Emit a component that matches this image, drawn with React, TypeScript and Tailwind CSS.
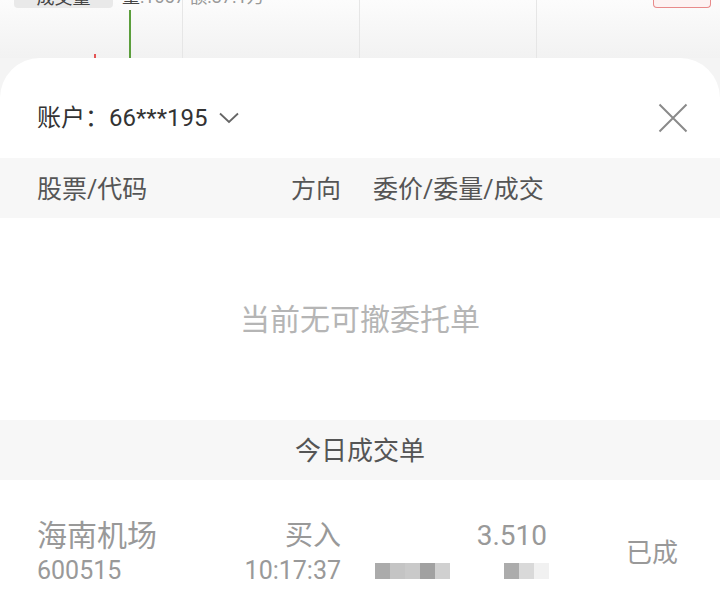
import React from "react";

const font = { fontFamily: '"Roboto", "Noto Sans CJK SC", "Noto Sans", sans-serif' };

function Blocks({ colors }: { colors: string[] }) {
  return (
    <div className="flex">
      {colors.map((c, i) => (
        <div key={i} className="w-[15px] h-[16px]" style={{ backgroundColor: c }} />
      ))}
    </div>
  );
}

export default function App() {
  return (
    <div className="w-[720px] h-[612px] overflow-hidden bg-[#f4f4f4] flex flex-col" style={font}>
      {/* background chart peek */}
      <div className="relative h-[58px] shrink-0 bg-gradient-to-b from-[#fcfcfc] to-[#f2f2f2] overflow-hidden">
        <div className="absolute left-[182px] top-0 w-px h-full bg-[#e6e6e6]" />
        <div className="absolute left-[359px] top-0 w-px h-full bg-[#e6e6e6]" />
        <div className="absolute left-[536px] top-0 w-px h-full bg-[#e6e6e6]" />
        <div className="absolute left-[14px] top-0 w-[99px] h-[8px] rounded-b-[4px] bg-[#e9e9e9] overflow-hidden flex items-end justify-center">
          <span className="text-[18px] leading-[18px] text-[#444] mb-[1px]">成交量</span>
        </div>
        <div className="absolute left-[122px] top-[-12px] text-[18px] leading-[18px] text-[#999] whitespace-nowrap">
          <span className="text-[#444]">量</span>:1057 额:37.1万
        </div>
        <div className="absolute left-[94px] top-[54px] w-[2px] h-[4px] bg-[#e45555]" />
        <div className="absolute left-[129px] top-[10px] w-[2px] h-[48px] bg-[#5b9e3c]" />
        <div className="absolute left-[653px] top-0 w-[58px] h-[8px] border border-t-0 border-[#e88a8a] rounded-b-[4px] bg-[#fdf2f2]" />
      </div>

      {/* sheet */}
      <div className="flex-1 bg-white rounded-t-[40px] flex flex-col">
        <div className="h-[100px] shrink-0 flex items-center justify-between pl-[37px] pr-[32px] pt-[20px]">
          <div className="flex items-center text-[24px] text-[#333]">
            <span>账户：66***195</span>
            <svg className="ml-[12px]" width="20" height="12" viewBox="0 0 20 12" fill="none">
              <path d="M1 1.5 L10 10 L19 1.5" stroke="#666" strokeWidth="1.8" />
            </svg>
          </div>
          <svg width="30" height="30" viewBox="0 0 30 30" fill="none">
            <path d="M1.5 1.5 L28.5 28.5 M28.5 1.5 L1.5 28.5" stroke="#8a8a8a" strokeWidth="2" />
          </svg>
        </div>

        <div className="h-[60px] shrink-0 bg-[#f7f7f7] flex items-center pl-[37px] pt-[4px] text-[25px] text-[#555]">
          <div className="w-[184px]">股票/代码</div>
          <div className="w-[120px] text-right">方向</div>
          <div className="ml-[32px]">委价/委量/成交</div>
        </div>

        <div className="h-[202px] shrink-0 flex items-center justify-center text-[30px] text-[#b5b5b5]">
          当前无可撤委托单
        </div>

        <div className="h-[60px] shrink-0 bg-[#f7f7f7] flex items-center justify-center pt-[3px] text-[26px] text-[#555]">
          今日成交单
        </div>

        <div className="flex items-start pl-[37px] pt-[38px] text-[#999]">
          <div className="w-[184px] flex flex-col">
            <div className="text-[30px] leading-[36px]">海南机场</div>
            <div className="text-[25px] leading-[34px]">600515</div>
          </div>
          <div className="w-[120px] flex flex-col items-end">
            <div className="text-[28px] leading-[36px]">买入</div>
            <div className="text-[25px] leading-[34px]">10:17:37</div>
          </div>
          <div className="ml-[34px] w-[174px] flex flex-col">
            <div className="text-[28px] leading-[36px] text-right pr-[2px]">3.510</div>
            <div className="h-[34px] flex items-center">
              <Blocks colors={["#ababab", "#c4c4c4", "#c9c9c9", "#a1a1a1", "#d0d0d0"]} />
              <div className="w-[62px]" />
              <Blocks colors={["#acacac", "#d9d9d9", "#f1f1f1"]} />
            </div>
          </div>
          <div className="ml-[77px] h-[70px] flex items-center text-[26px]">已成</div>
        </div>
      </div>
    </div>
  );
}
